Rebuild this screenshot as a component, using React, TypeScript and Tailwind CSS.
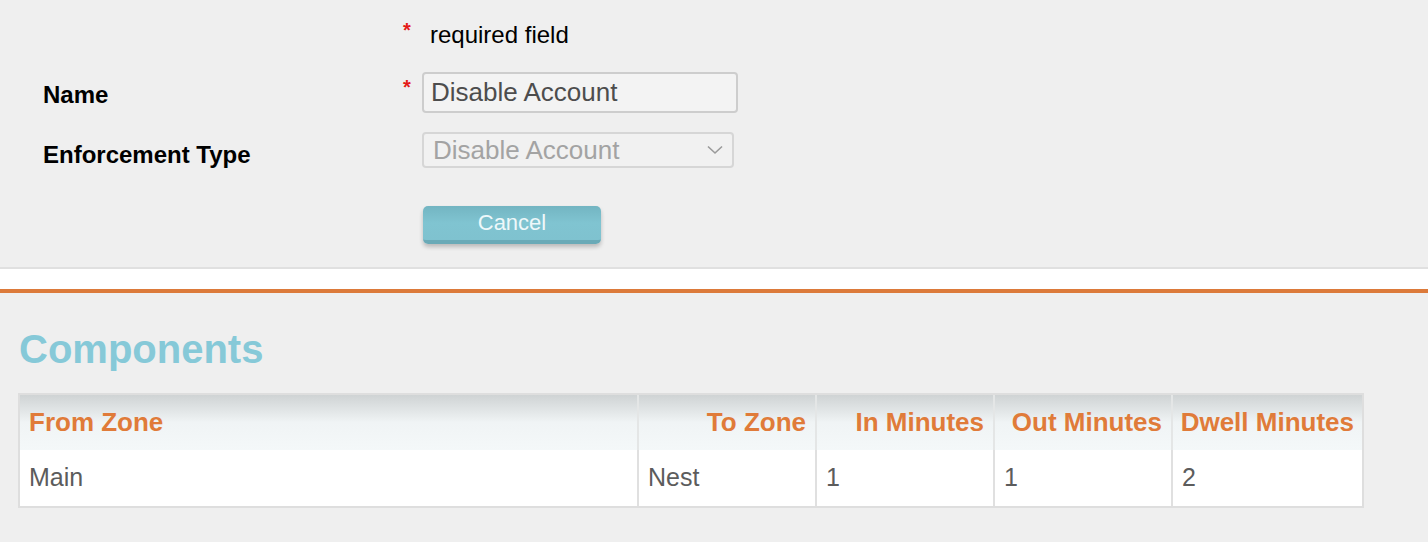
import React from 'react';

const font = { fontFamily: '"Liberation Sans", Arial, Helvetica, sans-serif' };

const columns = [
  { title: 'From Zone', value: 'Main', w: 'w-[617px]', head: 'justify-start pl-[9px]' },
  { title: 'To Zone', value: 'Nest', w: 'w-[178px] border-l-2', head: 'justify-end pr-[9px]' },
  { title: 'In Minutes', value: '1', w: 'w-[178px] border-l-2', head: 'justify-end pr-[9px]' },
  { title: 'Out Minutes', value: '1', w: 'w-[178px] border-l-2', head: 'justify-end pr-[9px]' },
  { title: 'Dwell Minutes', value: '2', w: 'w-[191px] border-l-2', head: 'justify-end pr-[8px]' },
];

function Star() {
  return <span className="text-[#e41b17] text-[20px] leading-none font-bold">*</span>;
}

export default function App() {
  return (
    <div className="w-[1428px] h-[542px] bg-[#efefef] overflow-hidden" style={font}>
      {/* form */}
      <div className="h-[267px] pt-[15px] pl-[43px]">
        <div className="flex h-[40px]">
          <div className="w-[360px]" />
          <div className="w-[19px] pt-[5px]">
            <Star />
          </div>
          <div className="pl-[8px] text-[24px] leading-[40px] text-black">required field</div>
        </div>

        <div className="flex items-start mt-[17px]">
          <div className="w-[360px] mt-[9px] text-[24px] leading-[28px] font-bold text-black">Name</div>
          <div className="w-[19px] pt-[5px]">
            <Star />
          </div>
          <input
            readOnly
            value="Disable Account"
            className="w-[316px] h-[41px] rounded-[4px] border-2 border-[#cdcdcd] bg-[#f3f3f3] px-[7px] text-[26px] text-[#4d4d4d] outline-none"
            style={font}
          />
        </div>

        <div className="flex items-start mt-[19px]">
          <div className="w-[379px] mt-[9px] text-[24px] leading-[28px] font-bold text-black">Enforcement Type</div>
          <div className="w-[312px] h-[36px] rounded-[4px] border-2 border-[#d6d6d6] bg-[#f1f1f1] flex items-center justify-between pl-[9px] pr-[9px]">
            <span className="text-[26px] leading-none text-[#a3a3a3]">Disable Account</span>
            <svg width="16" height="10" viewBox="0 0 16 10" fill="none">
              <path d="M1 1.5 L8 8 L15 1.5" stroke="#9a9a9a" strokeWidth="1.6" />
            </svg>
          </div>
        </div>

        <div className="flex mt-[37px]">
          <div className="w-[380px]" />
          <button
            className="w-[178px] h-[38px] rounded-[5px] border-b-[4px] border-[#6aaab7] bg-gradient-to-b from-[#73b5c2] via-[#80c4d1] to-[#7fc2cf] shadow-[0_3px_4px_rgba(0,0,0,0.22)] text-[22px] leading-none text-[#eef8fa]"
            style={font}
          >
            Cancel
          </button>
        </div>
      </div>

      <div className="h-[2px] bg-[#e0e0e0]" />
      <div className="h-[20px] bg-white" />
      <div className="h-[4px] bg-[#dc7a3a]" />

      {/* components */}
      <div className="pl-[19px] pt-[32px]">
        <h2 className="text-[40px] leading-[48px] font-bold text-[#86c9d8]">Components</h2>
      </div>

      <div className="ml-[18px] mt-[20px] w-[1346px] border-2 border-[#dedede]">
        <div className="flex h-[55px] bg-gradient-to-b from-[#cfd3d4] via-[#f0f4f5] to-[#f4f8f9]">
          {columns.map((c) => (
            <div key={c.title} className={`${c.w} border-[#e4e6e6] flex items-center ${c.head} text-[26px] font-bold text-[#e07b39]`}>
              {c.title}
            </div>
          ))}
        </div>
        <div className="flex h-[56px] bg-white">
          {columns.map((c) => (
            <div key={c.title} className={`${c.w} border-[#e0e0e0] flex items-center pl-[9px] text-[25px] text-[#5c5c5c]`}>
              {c.value}
            </div>
          ))}
        </div>
      </div>
    </div>
  );
}
